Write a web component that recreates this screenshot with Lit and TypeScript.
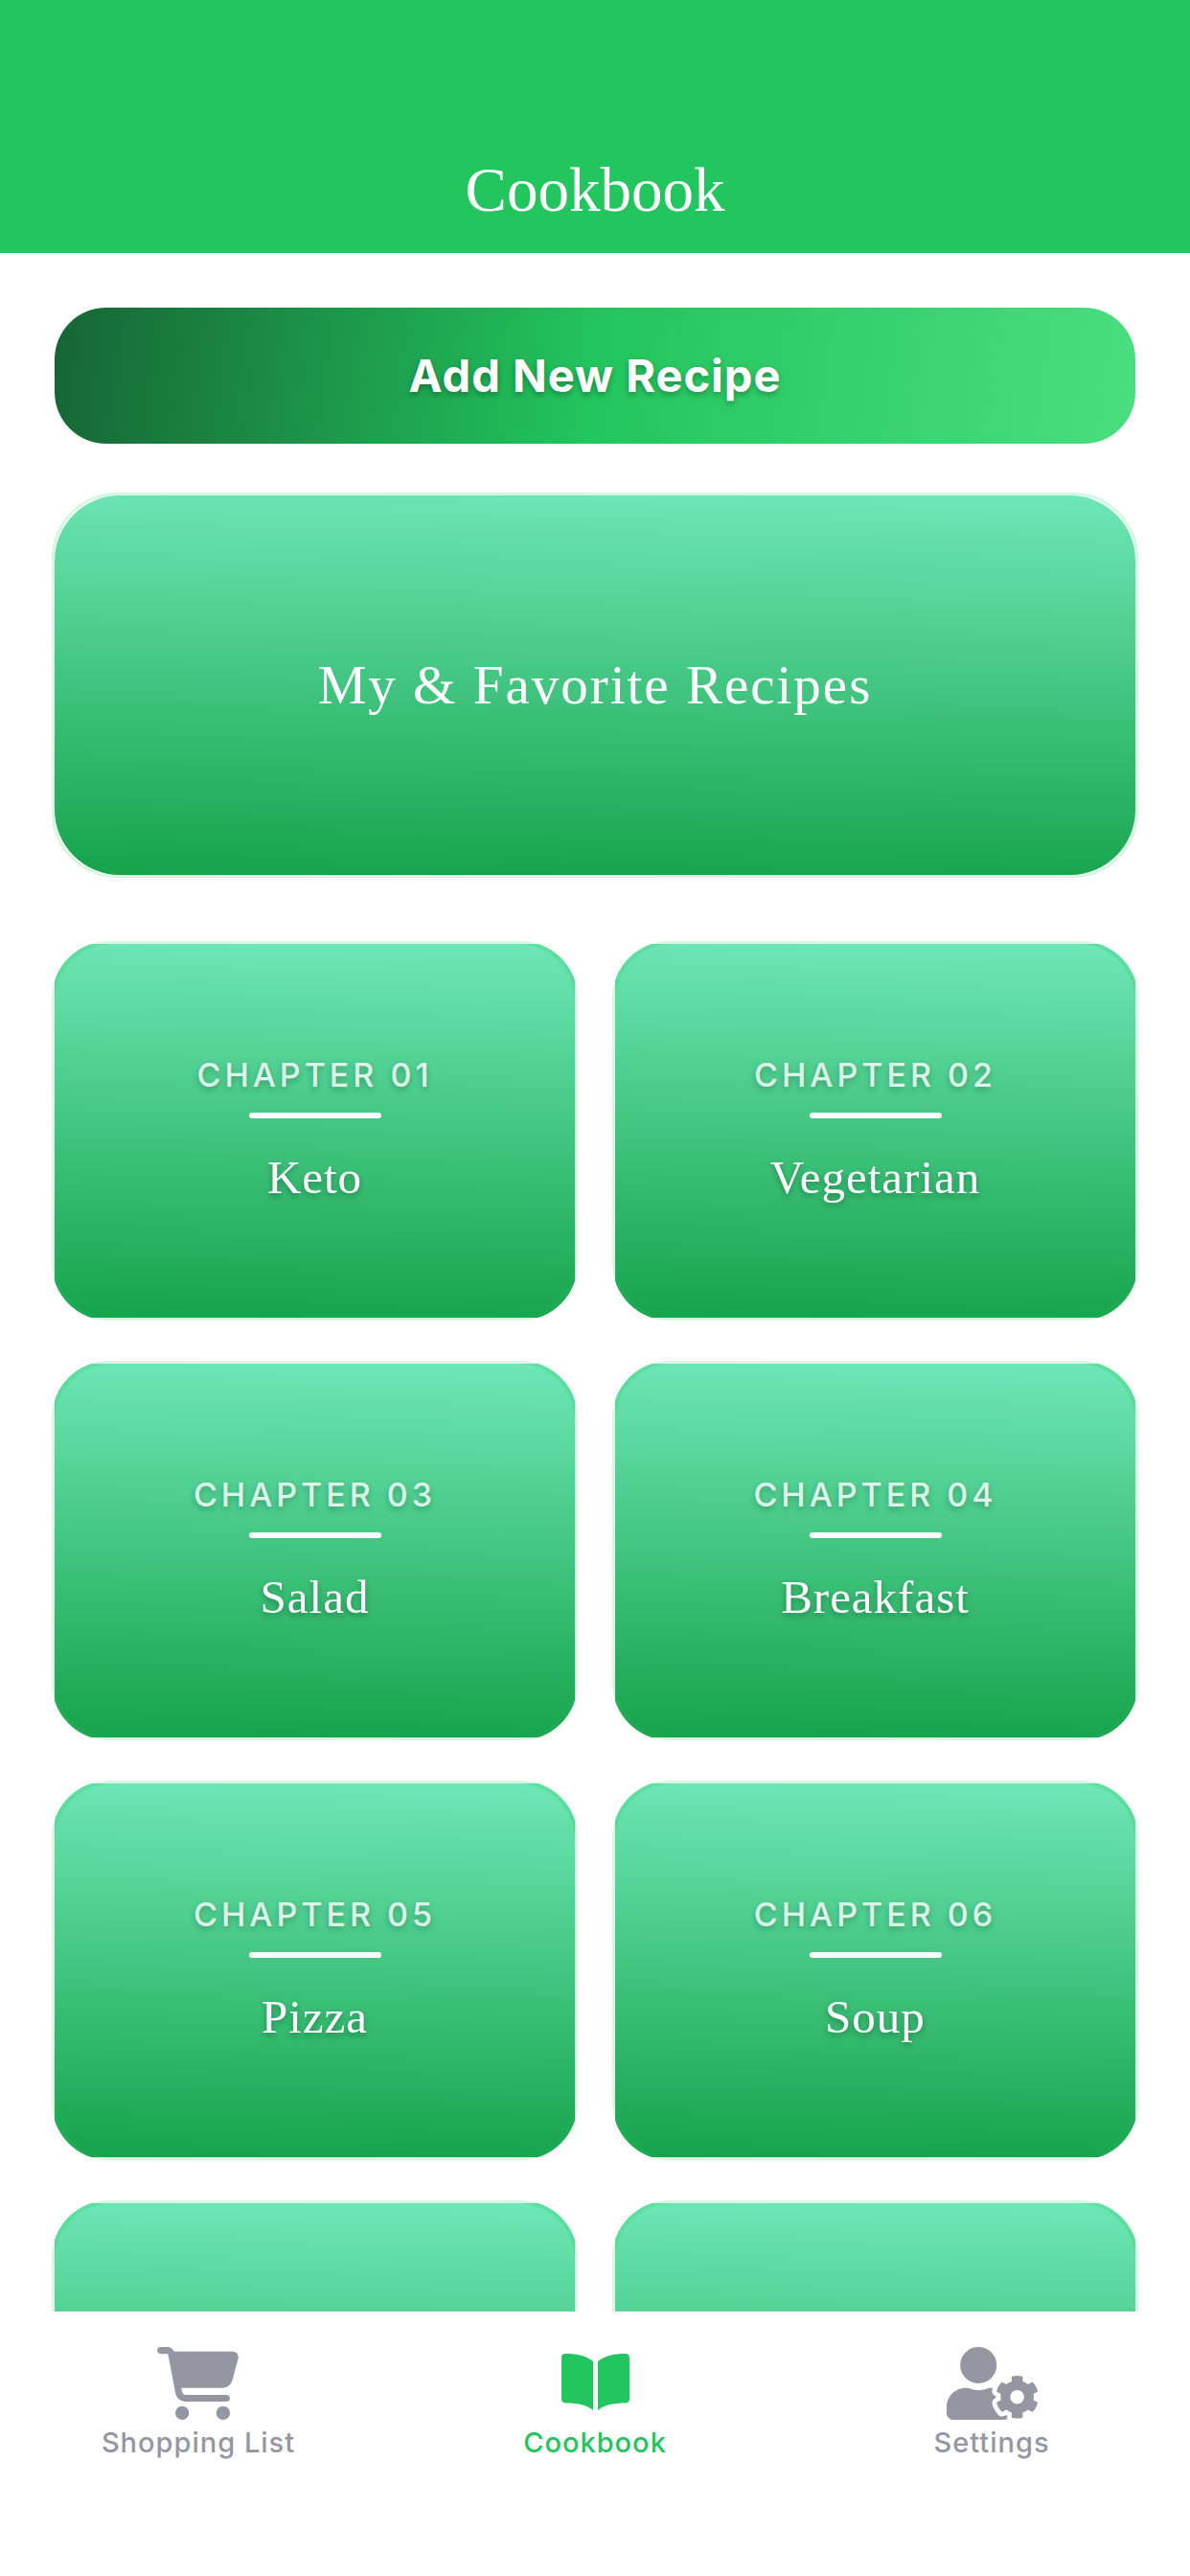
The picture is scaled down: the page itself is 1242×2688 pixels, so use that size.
import { LitElement, html, css, svg, nothing } from "lit";
import { customElement, property } from "lit/decorators.js";

const icons = {
  cart: {
    box: "0 0 576 512",
    shape: svg`<path d="M0 24C0 10.700 10.700 0 24 0H69.500c22 0 41.500 12.800 50.600 32h411c26.300 0 45.500 25 38.600 50.400l-41 152.300c-8.500 31.400-37 53.300-69.500 53.300H170.700l5.400 28.500c2.200 11.300 12.100 19.500 23.600 19.500H488c13.300 0 24 10.700 24 24s-10.700 24-24 24H199.700c-34.600 0-64.300-24.600-70.700-58.500L77.400 54.500c-.7-3.800-4-6.500-7.900-6.500H24C10.700 48 0 37.300 0 24zM128 464a48 48 0 1 1 96 0 48 48 0 1 1 -96 0zm336-48a48 48 0 1 1 0 96 48 48 0 1 1 0-96z"/>`,
  },
  book: {
    box: "0 0 84 76",
    shape: svg`<path d="M11 7C24 7 33 9.500 40 15V66C33 60.500 25 58.500 11 58.500Q7 58 7 54V11.500Q7 7 11 7Z"/><path d="M74 7C61 7 52 9.500 45 15V66C52 60.500 60 58.500 74 58.500Q78 58 78 54V11.500Q78 7 74 7Z"/>`,
  },
  userGear: {
    box: "0 0 640 512",
    shape: svg`<path d="M610.500 373.300c2.600-14.100 2.600-28.500 0-42.600l25.800-14.900c3-1.700 4.300-5.200 3.300-8.500-6.700-21.600-18.200-41.200-33.200-57.400-2.300-2.500-6-3.100-9-1.400l-25.800 14.900c-10.900-9.300-23.400-16.500-36.900-21.300v-29.800c0-3.400-2.400-6.400-5.700-7.100-22.300-5-45-4.800-66.200 0-3.300.7-5.700 3.700-5.700 7.100v29.800c-13.500 4.800-26 12-36.900 21.300l-25.800-14.900c-2.900-1.700-6.700-1.100-9 1.400-15 16.200-26.500 35.800-33.200 57.400-1 3.300.4 6.800 3.300 8.500l25.800 14.900c-2.600 14.100-2.600 28.500 0 42.600l-25.800 14.900c-3 1.700-4.300 5.200-3.300 8.500 6.700 21.600 18.200 41.100 33.200 57.400 2.300 2.500 6 3.100 9 1.400l25.800-14.900c10.900 9.300 23.400 16.500 36.900 21.300v29.800c0 3.400 2.400 6.400 5.700 7.100 22.300 5 45 4.800 66.200 0 3.300-.7 5.700-3.700 5.700-7.100v-29.800c13.500-4.800 26-12 36.900-21.300l25.800 14.900c2.900 1.700 6.700 1.100 9-1.400 15-16.200 26.500-35.800 33.200-57.400 1-3.300-.4-6.800-3.300-8.500l-25.800-14.900zM496 400.500c-26.800 0-48.500-21.800-48.500-48.500s21.800-48.500 48.500-48.500 48.500 21.800 48.500 48.500-21.700 48.500-48.500 48.500zM224 256c70.700 0 128-57.300 128-128S294.700 0 224 0 96 57.300 96 128s57.300 128 128 128zm201.200 226.500c-2.300-1.200-4.600-2.600-6.800-3.900l-7.900 4.600c-6 3.400-12.800 5.300-19.600 5.300-10.900 0-21.400-4.600-28.900-12.600-18.300-19.800-32.300-43.900-40.200-69.600-5.500-17.700 1.900-36.400 17.900-45.700l7.900-4.600c-.1-2.600-.1-5.200 0-7.800l-7.900-4.600c-16-9.200-23.400-28-17.900-45.700.9-2.900 2.200-5.800 3.200-8.700-3.800-.3-7.500-1.200-11.400-1.200h-16.700c-22.200 10.200-46.900 16-72.900 16s-50.600-5.800-72.900-16h-16.700C60.200 288 0 348.200 0 422.400V464c0 26.500 21.500 48 48 48h352c10.100 0 19.500-3.200 27.200-8.500-1.200-3.800-2-7.700-2-11.800v-9.200z"/>`,
  },
};

@customElement("chapter-card")
export class ChapterCard extends LitElement {
  static styles = [
    css`
      :host {
        display: block;
      }
      .card {
        display: block;
        width: 100%;
        padding: 3px;
        border: none;
        border-radius: 60px;
        background: #d9f5e3;
        overflow: hidden;
        cursor: pointer;
        color: #ffffff;
      }
      .edge {
        display: block;
        background: linear-gradient(#5fe0a2, #1ba850);
      }
      .face {
        display: flex;
        flex-direction: column;
        align-items: center;
        justify-content: center;
        height: 390px;
        border-radius: 60px;
        background: linear-gradient(181deg, #6ee7b7, #16a34a);
      }
      .number {
        font: 500 34px/46px Inter, "Liberation Sans", sans-serif;
        letter-spacing: 4px;
        opacity: 0.8;
        text-shadow: 0 3px 6px rgba(0, 0, 0, 0.3);
      }
      .rule {
        width: 138px;
        height: 6px;
        margin: 16px 0 30px;
        border-radius: 3px;
        background: #ffffff;
      }
      .name {
        font: 500 49px/64px "Liberation Serif", serif;
        letter-spacing: 1px;
        text-shadow: 0 3px 6px rgba(0, 0, 0, 0.3);
      }
    `,
  ];

  @property()
  number = "";

  @property()
  name = "";

  render() {
    return html`
      <button class="card">
        <span class="edge">
          <span class="face">
            ${this.name
              ? html`<span class="number">CHAPTER ${this.number}</span>
                  <span class="rule"></span>
                  <span class="name">${this.name}</span>`
              : nothing}
          </span>
        </span>
      </button>
    `;
  }
}

@customElement("app-root")
export class AppRoot extends LitElement {
  static styles = [
    css`
      :host {
        display: flex;
        flex-direction: column;
        height: 100vh;
        background: #ffffff;
        font-family: Inter, "Liberation Sans", sans-serif;
      }
      header {
        display: flex;
        justify-content: center;
        padding: 162px 0 30px;
        background: #22c55e;
      }
      h1 {
        margin: 0;
        color: #ffffff;
        font: 400 65px/72px "Liberation Serif", serif;
      }
      main {
        flex: 1;
        min-height: 0;
        overflow: hidden;
        padding: 57px 54px 0;
      }
      .add {
        display: block;
        width: calc(100% - 6px);
        height: 142px;
        margin: 0 3px 51px;
        border: none;
        border-radius: 54px;
        background: linear-gradient(97deg, #166534, #22c55e 50%, #4ade80);
        color: #ffffff;
        font: 700 47px/60px Inter, "Liberation Sans", sans-serif;
        letter-spacing: 1px;
        text-shadow: 0 3px 6px rgba(0, 0, 0, 0.3);
        cursor: pointer;
      }
      .favorite {
        display: block;
        width: 100%;
        padding: 0;
        border: 3px solid #d9f5e3;
        border-radius: 68px;
        background: none;
        color: #ffffff;
        cursor: pointer;
      }
      .favorite span {
        display: flex;
        align-items: center;
        justify-content: center;
        height: 396px;
        border-radius: 68px;
        background: linear-gradient(181deg, #6ee7b7, #16a34a);
        font: 500 57px/64px "Liberation Serif", serif;
        letter-spacing: 2px;
      }
      .chapters {
        display: grid;
        grid-template-columns: 1fr 1fr;
        gap: 42px 36px;
        margin-top: 66px;
      }
      nav {
        display: grid;
        grid-template-columns: 1fr 1fr 1fr;
        padding: 37px 0 118px;
        background: #ffffff;
      }
      nav a {
        display: flex;
        flex-direction: column;
        align-items: center;
        gap: 2px;
        color: #9496a1;
        font-size: 29px;
        font-weight: 500;
        line-height: 43px;
        letter-spacing: 1px;
        text-decoration: none;
      }
      nav a.active {
        color: #22c55e;
      }
      nav svg {
        height: 76px;
        fill: currentColor;
      }
    `,
  ];

  // a blank name leaves the card without a label
  @property()
  chapters = [
    "Keto",
    "Vegetarian",
    "Salad",
    "Breakfast",
    "Pizza",
    "Soup",
    "",
    "",
  ];

  @property()
  tabs = [
    { label: "Shopping List", icon: icons.cart, active: false },
    { label: "Cookbook", icon: icons.book, active: true },
    { label: "Settings", icon: icons.userGear, active: false },
  ];

  render() {
    return html`
      <header><h1>Cookbook</h1></header>
      <main>
        <button class="add">Add New Recipe</button>
        <button class="favorite"><span>My &amp; Favorite Recipes</span></button>
        <div class="chapters">
          ${this.chapters.map(
            (name, i) =>
              html`<chapter-card
                .number=${String(i + 1).padStart(2, "0")}
                .name=${name}
              ></chapter-card>`
          )}
        </div>
      </main>
      <nav>
        ${this.tabs.map(
          (tab) =>
            html`<a href="#" class=${tab.active ? "active" : ""}>
              <svg viewBox=${tab.icon.box} aria-hidden="true">
                ${tab.icon.shape}
              </svg>
              ${tab.label}
            </a>`
        )}
      </nav>
    `;
  }
}
